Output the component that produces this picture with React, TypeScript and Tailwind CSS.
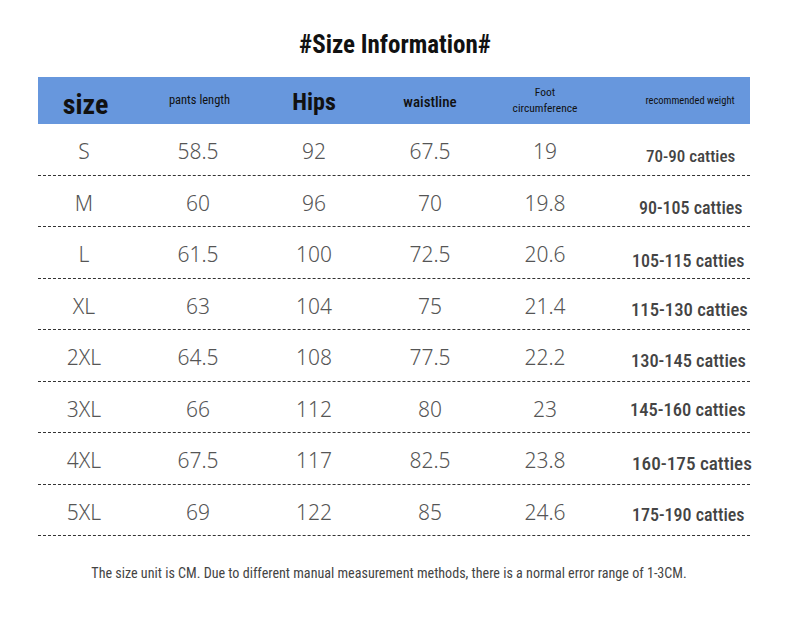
const cond = { fontFamily: '"Roboto Condensed", "Liberation Sans", sans-serif' };
const light = { fontFamily: '"Noto Sans", "Open Sans", sans-serif' };

// per-row sizing of the weight column, it drifts a little in the source image
const rows = [
  { size: "S", pants: "58.5", hips: "92", waist: "67.5", foot: "19", weight: "70-90 catties", w: "text-[17px] pl-[54px] pt-[14px]" },
  { size: "M", pants: "60", hips: "96", waist: "70", foot: "19.8", weight: "90-105 catties", w: "text-[18px] pl-[47px] pt-[14px]" },
  { size: "L", pants: "61.5", hips: "100", waist: "72.5", foot: "20.6", weight: "105-115 catties", w: "text-[18px] pl-[40px] pt-[16px]" },
  { size: "XL", pants: "63", hips: "104", waist: "75", foot: "21.4", weight: "115-130 catties", w: "text-[18.7px] pl-[39px] pt-[12px]" },
  { size: "2XL", pants: "64.5", hips: "108", waist: "77.5", foot: "22.2", weight: "130-145 catties", w: "text-[18.4px] pl-[39px] pt-[12px]" },
  { size: "3XL", pants: "66", hips: "112", waist: "80", foot: "23", weight: "145-160 catties", w: "text-[18.5px] pl-[38px] pt-[8px]" },
  { size: "4XL", pants: "67.5", hips: "117", waist: "82.5", foot: "23.8", weight: "160-175 catties", w: "text-[19.2px] pl-[40px] pt-[12px]" },
  { size: "5XL", pants: "69", hips: "122", waist: "85", foot: "24.6", weight: "175-190 catties", w: "text-[18px] pl-[40px] pt-[10px]" },
];

const grid = "grid grid-cols-[92px_136px_96px_136px_94px_158px] items-center text-center";

export default function App() {
  return (
    <div className="w-[790px] h-[624px] bg-white overflow-hidden">
      <h1 className="pt-[26px] h-[77px] text-center text-[25px] font-bold text-[#111]" style={cond}>
        #Size Information#
      </h1>
      <div className="ml-[38px] w-[712px]">
        <div className={`${grid} h-[47px] bg-[#6797dd] text-[#111]`} style={cond}>
          <div className="text-[28px] font-bold leading-none pt-[8px] pl-[3px]">size</div>
          <div className="text-[12.5px] pl-[3px]">pants length</div>
          <div className="text-[24px] font-bold leading-none pt-[2px]">Hips</div>
          <div className="text-[15px] font-medium pt-[4px]">waistline</div>
          <div className="text-[11.5px] leading-[16px] pb-[2px]">
            Foot
            <br />
            circumference
          </div>
          <div className="text-[10.5px] pl-[38px]">recommended weight</div>
        </div>
        {rows.map((r) => (
          <div
            key={r.size}
            className={`${grid} h-[51.5px] border-b border-dashed border-[#333] text-[#555]`}
          >
            <div className="text-[21px] font-light pt-[5px]" style={light}>{r.size}</div>
            <div className="text-[21px] font-light pt-[5px]" style={light}>{r.pants}</div>
            <div className="text-[21px] font-light pt-[5px]" style={light}>{r.hips}</div>
            <div className="text-[21px] font-light pt-[5px]" style={light}>{r.waist}</div>
            <div className="text-[21px] font-light pt-[5px]" style={light}>{r.foot}</div>
            <div className={`${r.w} font-medium text-[#444] whitespace-nowrap text-left`} style={cond}>{r.weight}</div>
          </div>
        ))}
      </div>
      <p className="mt-[27px] ml-[-12px] text-center text-[14.1px] text-[#444]" style={cond}>
        The size unit is CM. Due to different manual measurement methods, there is a normal error range of 1-3CM.
      </p>
    </div>
  );
}
